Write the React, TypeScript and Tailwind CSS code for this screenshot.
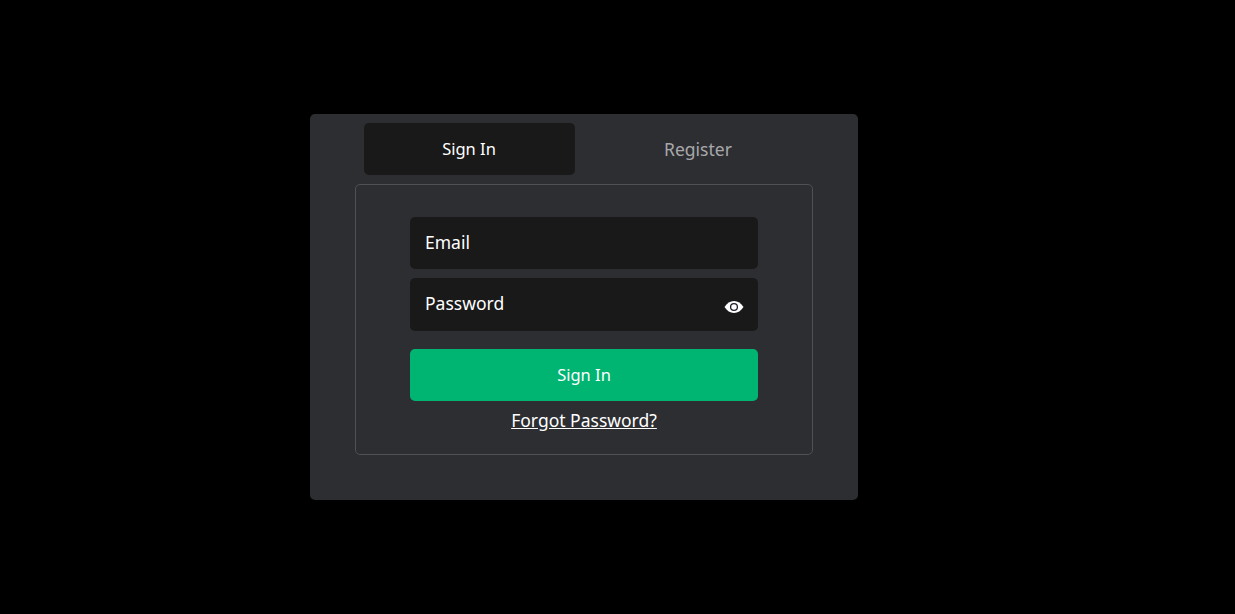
import { useState } from "react";

function EyeIcon() {
	return (
		<svg width="20" height="20" viewBox="0 0 20 20" className="absolute right-[14px] top-[19px]">
			<path d="M0.5 10C3 6.2 6.2 4 10 4s7 2.2 9.5 6c-2.5 3.8-5.7 6-9.5 6S3 13.8 0.5 10z" fill="#fff" />
			<circle cx="10" cy="10" r="3.4" fill="#fff" stroke="#1e1e2a" strokeWidth="1.3" />
		</svg>
	);
}

export default function App() {
	const [tab] = useState("signin");

	return (
		<div className="h-[614px] bg-black flex items-center pl-[310px] font-['Noto_Sans','Open_Sans',sans-serif] text-[17.5px] text-white">
			<div className="w-[548px] h-[386px] bg-[#2d2e32] rounded-[5px] pt-[9px] flex flex-col items-center">
				<div className="flex gap-[18px] h-[52px] ml-[-1px]">
					<button className={`w-[211px] rounded-[5px] text-[16.5px] ${tab === "signin" ? "bg-[#191919]" : ""}`}>Sign In</button>
					<button className="w-[211px] text-[#a8a8ab]">Register</button>
				</div>
				<div className="mt-[9px] w-[458px] h-[271px] border border-[#505155] rounded-[5px] pt-[32px] flex flex-col items-center">
					<div className="w-[348px] h-[52px] bg-[#191919] rounded-[5px] px-[15px] pb-[1px] flex items-center">Email</div>
					<div className="relative mt-[9px] w-[348px] h-[53px] bg-[#191919] rounded-[5px] px-[15px] pb-[2px] flex items-center">
						Password
						<EyeIcon />
					</div>
					<button className="mt-[18px] w-[348px] h-[52px] bg-[#00b472] rounded-[5px] text-[16.5px]">Sign In</button>
					<a className="mt-[7px] underline leading-[24px]">Forgot Password?</a>
				</div>
			</div>
		</div>
	);
}
